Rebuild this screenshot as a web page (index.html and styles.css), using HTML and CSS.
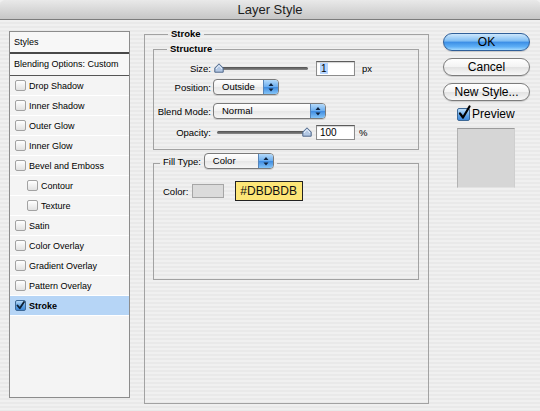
FILE: index.html
```html
<!DOCTYPE html>
<html>
<head>
<meta charset="utf-8">
<title>Layer Style</title>
<link rel="stylesheet" href="styles.css">
</head>
<body>
<div class="window">
  <div class="titlebar">Layer Style</div>
  <div class="main">
    <div class="styles-list">
      <div class="list-header">Styles</div>
      <div class="list-blending">Blending Options: Custom</div>
      <div class="item"><span class="cb"></span>Drop Shadow</div>
      <div class="item"><span class="cb"></span>Inner Shadow</div>
      <div class="item"><span class="cb"></span>Outer Glow</div>
      <div class="item"><span class="cb"></span>Inner Glow</div>
      <div class="item"><span class="cb"></span>Bevel and Emboss</div>
      <div class="item indent"><span class="cb"></span>Contour</div>
      <div class="item indent"><span class="cb"></span>Texture</div>
      <div class="item"><span class="cb"></span>Satin</div>
      <div class="item"><span class="cb"></span>Color Overlay</div>
      <div class="item"><span class="cb"></span>Gradient Overlay</div>
      <div class="item"><span class="cb"></span>Pattern Overlay</div>
      <div class="item selected"><span class="cb checked"><svg width="9" height="9" viewBox="0 0 9 9"><path d="M1.5 4.5 L3.8 7.3 L8 1" fill="none" stroke="#0d1f33" stroke-width="1.8" stroke-linecap="round" stroke-linejoin="round"/></svg></span>Stroke</div>
    </div>

    <fieldset class="group stroke-group">
      <legend class="legend legend-stroke">Stroke</legend>
      <fieldset class="group structure">
        <legend class="legend legend-structure">Structure</legend>
        <div class="row row-size">
          <span class="label">Size:</span>
          <div class="slider">
            <div class="track"></div>
            <svg class="thumb thumb-min" width="10" height="10" viewBox="0 0 10 10"><path d="M0.8 9.2 V5 L5 0.8 L9.2 5 V9.2 Z" fill="#b3c8e4" stroke="#4d6688" stroke-width="1" stroke-linejoin="round"/><path d="M2 6 L5 2.5 L8 6" fill="none" stroke="#e8f0fb" stroke-width="1"/></svg>
          </div>
          <div class="input"><span class="sel">1</span></div>
          <span class="unit">px</span>
        </div>
        <div class="row row-pos">
          <span class="label">Position:</span>
          <div class="select select-pos">
            <span class="select-text">Outside</span>
            <span class="arrow"><svg width="14" height="14" viewBox="0 0 14 14"><path d="M4.5 6 L7 3 L9.5 6 Z M4.5 8.5 L7 11.5 L9.5 8.5 Z" fill="#0f2440"/></svg></span>
          </div>
        </div>
        <div class="row row-blend">
          <span class="label">Blend Mode:</span>
          <div class="select select-blend">
            <span class="select-text">Normal</span>
            <span class="arrow"><svg width="14" height="14" viewBox="0 0 14 14"><path d="M4.5 6 L7 3 L9.5 6 Z M4.5 8.5 L7 11.5 L9.5 8.5 Z" fill="#0f2440"/></svg></span>
          </div>
        </div>
        <div class="row row-opacity">
          <span class="label">Opacity:</span>
          <div class="slider">
            <div class="track"></div>
            <svg class="thumb thumb-max" width="10" height="10" viewBox="0 0 10 10"><path d="M0.8 9.2 V5 L5 0.8 L9.2 5 V9.2 Z" fill="#b3c8e4" stroke="#4d6688" stroke-width="1" stroke-linejoin="round"/><path d="M2 6 L5 2.5 L8 6" fill="none" stroke="#e8f0fb" stroke-width="1"/></svg>
          </div>
          <div class="input">100</div>
          <span class="unit unit-pct">%</span>
        </div>
      </fieldset>

      <fieldset class="group fill">
        <legend class="legend legend-fill">
          <span class="fill-inner">
            <span class="fill-label">Fill Type:</span>
            <span class="select select-fill">
              <span class="select-text">Color</span>
              <span class="arrow"><svg width="14" height="14" viewBox="0 0 14 14"><path d="M4.5 6 L7 3 L9.5 6 Z M4.5 8.5 L7 11.5 L9.5 8.5 Z" fill="#0f2440"/></svg></span>
            </span>
          </span>
        </legend>
        <div class="color-row">
          <span class="color-label">Color:</span>
          <span class="swatch"></span>
          <span class="tooltip">#DBDBDB</span>
        </div>
      </fieldset>
    </fieldset>

    <div class="buttons">
      <div class="btn btn-ok">OK</div>
      <div class="btn">Cancel</div>
      <div class="btn">New Style...</div>
      <div class="preview-row">
        <span class="preview-cb"><svg width="15" height="16" viewBox="0 0 15 16"><path d="M3 8.5 L6 12.5 L12.5 1.5" fill="none" stroke="#000" stroke-width="2.2" stroke-linecap="round" stroke-linejoin="round"/></svg></span>
        <span class="preview-text">Preview</span>
      </div>
      <div class="preview-swatch"></div>
    </div>
  </div>
</div>
</body>
</html>
```

FILE: styles.css
```css
* { box-sizing: border-box; }
html, body { margin: 0; padding: 0; }
body {
  width: 540px;
  height: 411px;
  overflow: hidden;
  font-family: "Liberation Sans", Arial, sans-serif;
  color: #000;
  background: #ececec;
}
.window {
  width: 540px;
  height: 411px;
  background: repeating-linear-gradient(to bottom, #f0f0f0 0, #f0f0f0 2px, #e9e9e9 2px, #e9e9e9 4px);
}
.titlebar {
  height: 20px;
  border-bottom: 1px solid #7c7c7c;
  background: linear-gradient(#e9e9e9, #d6d6d6 55%, #c6c6c6);
  border-radius: 5px 5px 0 0;
  text-align: center;
  font-size: 13px;
  line-height: 19px;
  color: #1c1c1c;
}
.main {
  display: flex;
  align-items: flex-start;
  padding-left: 9px;
}

/* Styles list */
.styles-list {
  width: 121px;
  height: 367px;
  margin-top: 11px;
  margin-right: 14px;
  border: 1px solid #8c8c8c;
  background: #f4f4f4;
  font-size: 9px;
  flex-shrink: 0;
}
.list-header {
  height: 22px;
  border-bottom: 2px solid #484848;
  background: #f7f7f7;
  padding-left: 4px;
  line-height: 20px;
}
.list-blending {
  height: 22px;
  border-bottom: 1px solid #555;
  background: #f7f7f7;
  padding-left: 4px;
  line-height: 21px;
}
.item {
  height: 20px;
  border-bottom: 1px solid #ffffff;
  display: flex;
  align-items: center;
  padding-left: 5px;
}
.item.indent { padding-left: 17px; }
.item.selected {
  background: #b6d5f6;
  font-weight: bold;
}
.cb {
  width: 11px;
  height: 11px;
  margin-right: 3px;
  border: 1px solid #a2a2a2;
  border-radius: 2px;
  background: linear-gradient(#ffffff, #e2e2e2);
  display: flex;
  align-items: center;
  justify-content: center;
  flex-shrink: 0;
}
.cb.checked {
  border-color: #3d6896;
  background: linear-gradient(#b9dbf8, #5fa2e4 55%, #3d86d6);
}

/* Group boxes */
.group {
  margin: 0;
  padding: 0;
  min-width: 0;
  border: 1px solid #a2a2a2;
}
.legend {
  font-size: 9.5px;
  font-weight: bold;
  line-height: 12px;
  padding: 0 3px;
}
.stroke-group {
  width: 285px;
  margin-top: 8px;
  padding: 0 0 123px 8px;
  flex-shrink: 0;
}
.legend-stroke { margin-left: 15px; }
.structure {
  width: 266px;
  margin-top: 3px;
  padding-bottom: 9px;
}
.legend-structure { margin-left: 13px; }

.row {
  display: flex;
  align-items: center;
  font-size: 9.5px;
}
.row-size { margin-top: 6px; height: 15px; }
.row-pos { margin-top: 3px; height: 16px; }
.row-blend { margin-top: 8px; height: 16px; }
.row-opacity { margin-top: 6px; height: 15px; }
.label {
  width: 57px;
  margin-right: 2px;
  text-align: right;
  flex-shrink: 0;
}
.slider {
  position: relative;
  width: 99px;
  height: 15px;
  display: flex;
  align-items: center;
  padding: 0 4px;
}
.track {
  flex: 1;
  height: 3px;
  border-radius: 2px;
  background: linear-gradient(#4e4e4e, #8a8a8a);
}
.thumb {
  position: absolute;
  top: 2px;
}
.thumb-min { left: 1px; }
.thumb-max { left: 89px; }
.input {
  width: 39px;
  height: 15px;
  margin-left: 4px;
  border: 1px solid #8c8c8c;
  border-top-color: #5c5c5c;
  background: #fff;
  box-shadow: inset 0 1px 1px rgba(0,0,0,0.18);
  font-size: 10px;
  line-height: 13px;
  padding-left: 3px;
}
.sel { background: #b5d5ff; padding: 0 1px; }
.unit { margin-left: 7px; font-size: 9.5px; }
.unit-pct { margin-left: 4px; }

.select {
  height: 16px;
  display: flex;
  align-items: stretch;
  border: 1px solid #7a7a7a;
  border-radius: 4px;
  background: linear-gradient(#ffffff, #f1f1f1 50%, #e6e6e6 50%, #f6f6f6);
  box-shadow: 0 1px 0 rgba(0,0,0,0.12);
  font-size: 9.5px;
  overflow: hidden;
}
.select-text {
  flex: 1;
  padding-left: 8px;
  line-height: 14px;
}
.select-pos { width: 66px; }
.select-blend { width: 113px; }
.select-fill { width: 70px; }
.arrow {
  width: 15px;
  border-left: 1px solid #5684b8;
  background: linear-gradient(#b4dafa, #69acef 50%, #3d8ae0 50%, #84c4f7);
  display: flex;
  align-items: center;
  justify-content: center;
}

.fill {
  width: 266px;
  margin-top: 3px;
  padding: 0 0 78px 0;
}
.legend-fill {
  margin-left: 6px;
  padding: 0 3px 4px 3px;
  font-weight: normal;
  line-height: normal;
}
.fill-inner {
  display: flex;
  align-items: center;
  height: 16px;
}
.fill-label { margin-right: 3px; }
.color-row {
  display: flex;
  align-items: center;
  margin-top: 8px;
  padding-left: 9px;
  height: 20px;
  font-size: 9.5px;
}
.color-label { margin-right: 4px; }
.swatch {
  width: 32px;
  height: 14px;
  border: 1px solid #a6a6a6;
  background: #dbdbdb;
  margin-right: 11px;
}
.tooltip {
  height: 20px;
  width: 68px;
  border: 1px solid #222;
  background: #fde677;
  font-size: 12px;
  line-height: 18px;
  padding-left: 4px;
  color: #111;
}

/* Right buttons */
.buttons {
  width: 87px;
  margin-left: 14px;
  margin-top: 13px;
  display: flex;
  flex-direction: column;
  gap: 7px;
}
.btn {
  height: 18px;
  border-radius: 9px;
  border: 1px solid #7c7c7c;
  background: linear-gradient(#ffffff, #f3f3f3 50%, #e2e2e2 50%, #f7f7f7);
  box-shadow: 0 1px 1px rgba(0,0,0,0.15);
  text-align: center;
  font-size: 12px;
  line-height: 16px;
}
.btn-ok {
  border-color: #2f5f99;
  background: linear-gradient(#cde7fc, #7dbcf3 45%, #3b8de5 50%, #5fb0f6 80%, #a4dafe);
}
.preview-row {
  display: flex;
  align-items: center;
  margin-left: 14px;
  margin-top: -1px;
  height: 14px;
}
.preview-cb {
  position: relative;
  width: 13px;
  height: 13px;
  border: 1px solid #3d6896;
  border-radius: 2px;
  background: linear-gradient(#bfdffa, #64a7e8 55%, #3f88d9);
  margin-right: 2px;
  flex-shrink: 0;
}
.preview-cb svg {
  position: absolute;
  left: -1px;
  top: -4px;
}
.preview-text { font-size: 12px; }
.preview-swatch {
  width: 58px;
  height: 60px;
  margin-left: 14px;
  border: 1px solid;
  border-color: #9c9c9c #cfcfcf #e2e2e2 #b2b2b2;
  background: #d6d6d6;
}
```
